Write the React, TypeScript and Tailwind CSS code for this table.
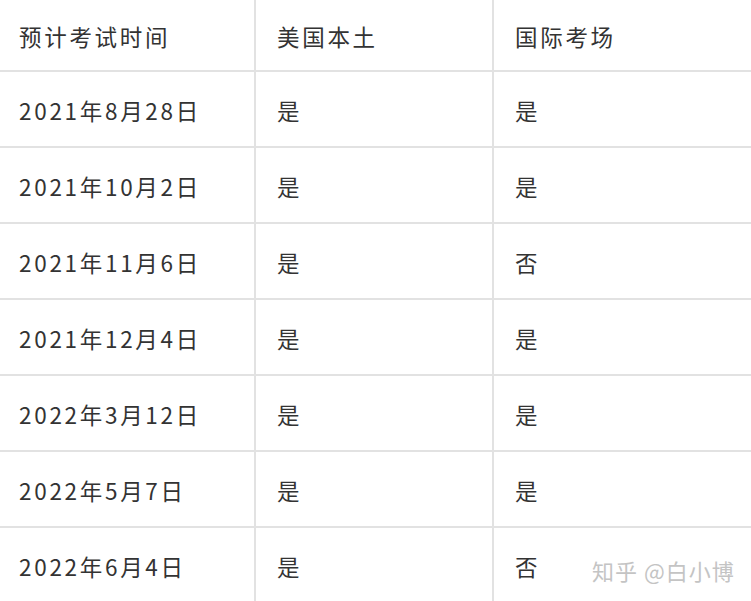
const header = ["预计考试时间", "美国本土", "国际考场"];

const rows: [string, string, string][] = [
  ["2021年8月28日", "是", "是"],
  ["2021年10月2日", "是", "是"],
  ["2021年11月6日", "是", "否"],
  ["2021年12月4日", "是", "是"],
  ["2022年3月12日", "是", "是"],
  ["2022年5月7日", "是", "是"],
  ["2022年6月4日", "是", "否"],
];

const font = { fontFamily: '"Noto Sans CJK SC", "Noto Sans", sans-serif' };

function Row({ cells, head }: { cells: string[]; head?: boolean }) {
  return (
    <div
      className={`grid grid-cols-[256px_238px_1fr] ${head ? "h-[72px]" : "h-[76px]"} border-b-2 border-[#e2e2e2]`}
    >
      {cells.map((c, i) => (
        <div
          key={i}
          className={`flex items-center pt-[4px] ${i === 0 ? "pl-[19px]" : "pl-[21px]"} ${
            i < 2 ? "border-r-2 border-[#e2e2e2]" : ""
          }`}
        >
          <span className="text-[22.5px] text-[#333] tracking-[2.7px]">{c}</span>
        </div>
      ))}
    </div>
  );
}

export default function App() {
  return (
    <div className="relative w-[751px] h-[601px] overflow-hidden bg-white" style={font}>
      <Row cells={header} head />
      {rows.map((r, i) => (
        <Row key={i} cells={r} />
      ))}
      <div className="absolute left-[592px] top-[554px] text-[22px] tracking-[1px] text-[#c4c4c4]">
        知乎 @白小博
      </div>
    </div>
  );
}
